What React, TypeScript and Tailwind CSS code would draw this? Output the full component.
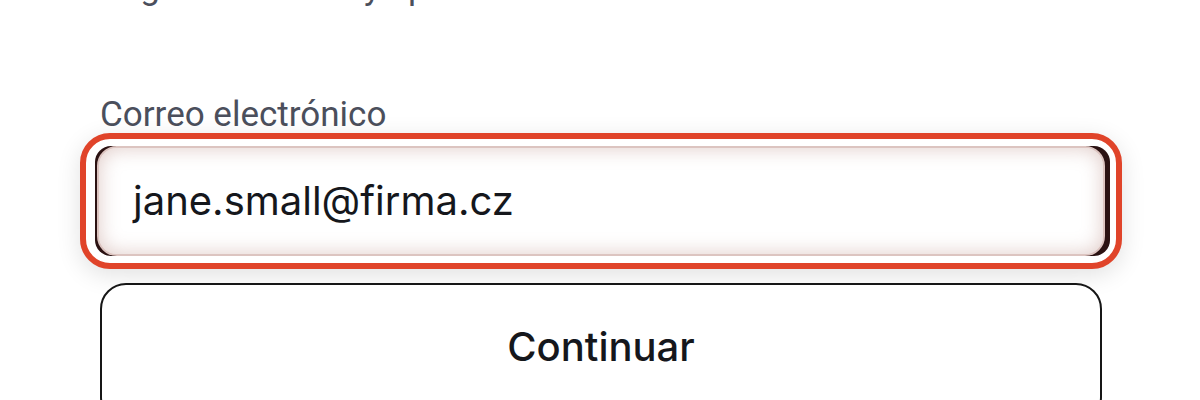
import React from "react";

export default function App() {
  return (
    <div className="w-[1200px] h-[400px] overflow-hidden bg-white">
      <div className="pl-[100px] pr-[98px]">
        <div className="h-[14px] overflow-hidden">
          <p
            className="-mt-[32px] whitespace-nowrap text-[35px] leading-[40px] text-[#4b4f5c]"
            style={{ fontFamily: "Roboto, 'Noto Sans', sans-serif" }}
          >
            Regístrate ahora ya pronto
          </p>
        </div>
        <div className="mt-[81px] flex flex-col">
          <label
            className="text-[35px] leading-[40px] text-[#4b4f5c]"
            style={{ fontFamily: "Roboto, 'Noto Sans', sans-serif" }}
          >
            Correo electrónico
          </label>
          <div className="-ml-[20px] -mr-[20px] -mt-[2px] h-[136px] rounded-[30px] border-[6px] border-[#e0442a] bg-white p-[7px] pl-[9px] pr-[6px] shadow-[0_6px_24px_rgba(0,0,0,0.12)]">
            <div className="flex h-full rounded-[16px] bg-[#2b1212]">
              <div className="ml-[2px] mr-[5px] flex flex-1 items-center rounded-[20px] border-2 border-[#dcc4c0] bg-white pl-[34px] shadow-[inset_0_0_20px_rgba(170,115,105,0.38)]">
                <span
                  className="text-[40px] leading-none text-[#15171c]"
                  style={{ fontFamily: "Inter, 'Noto Sans', sans-serif" }}
                >
                  jane.small@firma.cz
                </span>
              </div>
            </div>
          </div>
          <button
            className="mt-[14px] flex h-[140px] w-[1002px] items-start justify-center rounded-[26px] border-[2.5px] border-[#161616] bg-white pt-[38px] text-[40px] font-medium leading-[48px] text-[#15171c]"
            style={{ fontFamily: "Inter, 'Noto Sans', sans-serif" }}
          >
            Continuar
          </button>
        </div>
      </div>
    </div>
  );
}
